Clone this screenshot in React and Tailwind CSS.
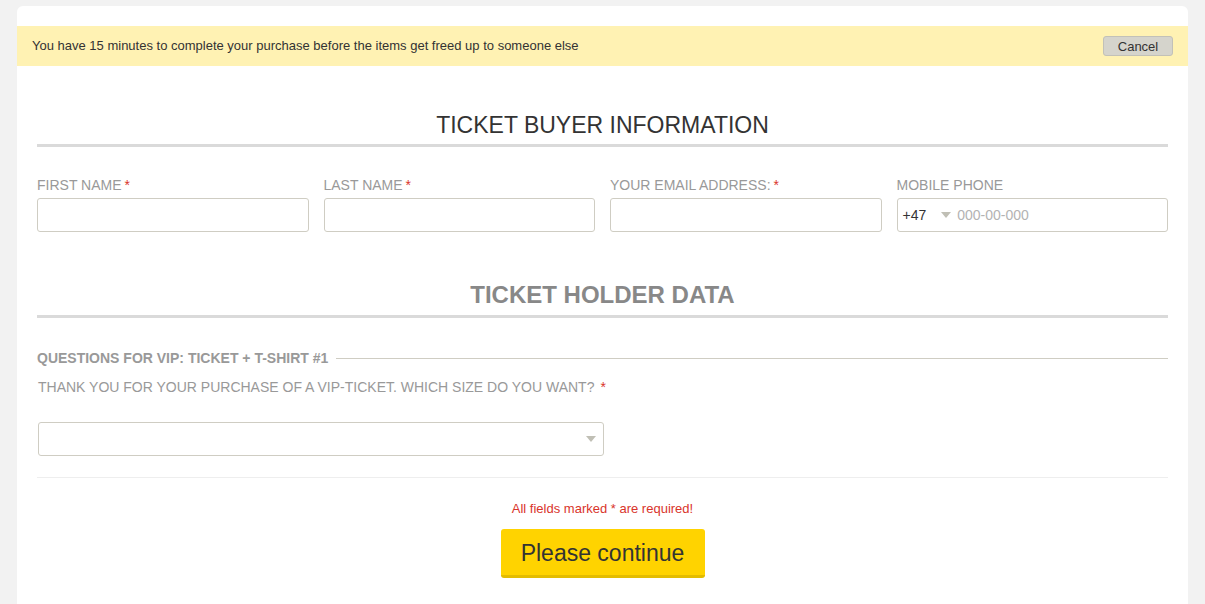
import React from "react";

const labelCls = "block text-[14px] leading-[16px] text-[#999] uppercase";
const inputCls = "block w-full h-[34px] border border-[#cfcdc3] rounded-[3px] bg-white";

function Caret() {
  return (
    <svg width="10" height="6" viewBox="0 0 10 6" className="shrink-0">
      <path d="M0 0h10L5 6z" fill="#c0bfb5" />
    </svg>
  );
}

function Field({ label, required, children }) {
  return (
    <div className="flex-1 min-w-0">
      <label className={labelCls}>
        {label}
        {required && <span className="text-[#d9342b] ml-[3px]">*</span>}
      </label>
      <div className="mt-[5px]">{children}</div>
    </div>
  );
}

export default function App() {
  return (
    <div className="min-h-[604px] bg-[#f2f2f2] pt-[6px] px-[17px]" style={{ fontFamily: '"Liberation Sans", Arial, sans-serif' }}>
      <div className="bg-white rounded-t-[6px] pt-[20px] pb-[26px]">
        <div className="h-[40px] bg-[#fff2b3] flex items-center justify-between pl-[15px] pr-[15px]">
          <p className="text-[13px] text-[#333]">
            You have 15 minutes to complete your purchase before the items get freed up to someone else
          </p>
          <button className="w-[70px] h-[20px] bg-[#d5d4cc] border border-[#c2c1b8] rounded-[3px] text-[13px] text-[#333] leading-none">
            Cancel
          </button>
        </div>

        <div className="px-[20px]">
          <h2 className="mt-[45px] text-center text-[23px] leading-[28px] text-[#333] pb-[5px] border-b-[3px] border-[#dadada]">
            TICKET BUYER INFORMATION
          </h2>

          <div className="mt-[30px] flex gap-[15px]">
            <Field label="First name" required>
              <input className={inputCls} />
            </Field>
            <Field label="Last name" required>
              <input className={inputCls} />
            </Field>
            <Field label="Your email address:" required>
              <input className={inputCls} />
            </Field>
            <Field label="Mobile phone">
              <div className={`${inputCls} flex items-center px-[5px] text-[14px]`}>
                <span className="text-[#333]">+47</span>
                <span className="ml-[15px]"><Caret /></span>
                <span className="ml-[6px] text-[#b3b3b3]">000-00-000</span>
              </div>
            </Field>
          </div>

          <h2 className="mt-[50px] text-center text-[24px] leading-[26px] font-bold text-[#888] pb-[7px] border-b-[3px] border-[#dadada]">
            TICKET HOLDER DATA
          </h2>

          <div className="mt-[33px] flex items-center gap-[8px]">
            <span className="text-[14px] leading-[14px] font-bold text-[#999]">QUESTIONS FOR VIP: TICKET + T-SHIRT #1</span>
            <div className="flex-1 h-px bg-[#cfcdc3]" />
          </div>

          <p className="mt-[14px] ml-px text-[14px] leading-[16px] text-[#999]">
            THANK YOU FOR YOUR PURCHASE OF A VIP-TICKET. WHICH SIZE DO YOU WANT?
            <span className="text-[#d9342b] ml-[6px]">*</span>
          </p>

          <div className="mt-[27px] ml-px w-[566px] h-[34px] border border-[#cfcdc3] rounded-[3px] flex items-center justify-end pr-[7px]">
            <Caret />
          </div>

          <div className="mt-[21px] h-px bg-[#eeeeee]" />

          <p className="mt-[24px] text-center text-[13px] leading-[14px] text-[#d9342b]">
            All fields marked * are required!
          </p>

          <div className="mt-[13px] flex justify-center">
            <button className="w-[204px] h-[49px] pt-[3px] bg-[#ffd300] border-b-[3px] border-[#e3bc00] rounded-[3px] text-[23px] text-[#333]">
              Please continue
            </button>
          </div>
        </div>
      </div>
    </div>
  );
}
